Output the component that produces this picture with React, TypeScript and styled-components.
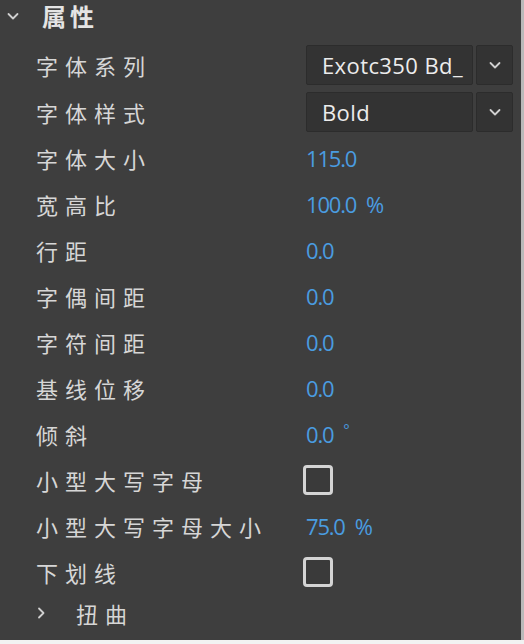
import styled, { createGlobalStyle } from 'styled-components';

const GlobalStyle = createGlobalStyle`
  html, body {
    margin: 0;
    padding: 0;
    background: #f2f2f2;
  }
`;

const Panel = styled.div`
  width: 521px;
  height: 640px;
  background: #3e3e3e;
  border-right: 3px solid #b9b9b9;
  overflow: hidden;
  font-family: "Noto Sans CJK SC", "Noto Sans", sans-serif;
  color: #d6d6d6;
`;

const Header = styled.div`
  height: 32px;
  display: flex;
  align-items: center;
  padding-left: 6px;
  gap: 22px;
`;

const HeaderTitle = styled.span`
  font-size: 24px;
  line-height: 28px;
  font-weight: 700;
  color: #e4e4e4;
  letter-spacing: 4px;
`;

const List = styled.div`
  display: flex;
  flex-direction: column;
  padding-top: 9px;
`;

const Row = styled.div<{ $tall?: boolean }>`
  height: ${({ $tall }) => ($tall ? '47px' : '46px')};
  display: grid;
  grid-template-columns: 270px 1fr;
  align-items: center;
  padding-left: 36px;
`;

const Label = styled.span`
  font-size: 22px;
  letter-spacing: 7px;
  white-space: nowrap;
  color: #d6d6d6;
`;

const Value = styled.span`
  font-family: "Open Sans", "Noto Sans", sans-serif;
  font-size: 22px;
  letter-spacing: -1.2px;
  color: #4a9ce0;
  display: flex;
  align-items: flex-start;
  gap: 10px;
`;

const Unit = styled.span`
  letter-spacing: 0;
`;

const Degree = styled.span`
  font-size: 15px;
  line-height: 1;
  margin-top: 3px;
`;

const Select = styled.div`
  display: flex;
  gap: 3px;
  height: 40px;
`;

const SelectText = styled.div`
  width: 150px;
  display: flex;
  align-items: center;
  padding-left: 15px;
  background: #333333;
  border: 1px solid #2c2c2c;
  border-radius: 2px;
  font-family: "Open Sans", "Noto Sans", sans-serif;
  font-size: 22px;
  letter-spacing: 0.4px;
  color: #ececec;
  white-space: nowrap;
  overflow: hidden;
`;

const SelectArrow = styled.div`
  width: 35px;
  display: flex;
  align-items: center;
  justify-content: center;
  background: #333333;
  border: 1px solid #2c2c2c;
  border-radius: 2px;
`;

const Checkbox = styled.div`
  width: 24px;
  height: 24px;
  margin-left: -3px;
  border: 3px solid #d4d4d4;
  border-radius: 4px;
  background: #3a3a3a;
`;

const Collapsed = styled.div`
  height: 46px;
  display: flex;
  align-items: center;
  padding-left: 34px;
  gap: 28px;
  margin-top: -5px;
`;

const Chevron = ({ dir, size = 14 }: { dir: 'down' | 'right'; size?: number }) => (
  <svg width={size} height={size} viewBox="0 0 14 14" fill="none">
    {dir === 'down' ? (
      <path d="M2.5 5 L7 9.5 L11.5 5" stroke="#d0d0d0" strokeWidth="1.8" strokeLinecap="round" strokeLinejoin="round" />
    ) : (
      <path d="M5 2.5 L9.5 7 L5 11.5" stroke="#d0d0d0" strokeWidth="1.8" strokeLinecap="round" strokeLinejoin="round" />
    )}
  </svg>
);

type Prop =
  | { label: string; kind: 'select'; value: string }
  | { label: string; kind: 'value'; value: string; unit?: string; degree?: boolean }
  | { label: string; kind: 'check' };

const props: Prop[] = [
  { label: '字体系列', kind: 'select', value: 'Exotc350 Bd_' },
  { label: '字体样式', kind: 'select', value: 'Bold' },
  { label: '字体大小', kind: 'value', value: '115.0' },
  { label: '宽高比', kind: 'value', value: '100.0', unit: '%' },
  { label: '行距', kind: 'value', value: '0.0' },
  { label: '字偶间距', kind: 'value', value: '0.0' },
  { label: '字符间距', kind: 'value', value: '0.0' },
  { label: '基线位移', kind: 'value', value: '0.0' },
  { label: '倾斜', kind: 'value', value: '0.0', degree: true },
  { label: '小型大写字母', kind: 'check' },
  { label: '小型大写字母大小', kind: 'value', value: '75.0', unit: '%' },
  { label: '下划线', kind: 'check' },
];

export default function App() {
  return (
    <>
      <GlobalStyle />
      <Panel>
        <Header>
          <Chevron dir="down" size={14} />
          <HeaderTitle>属性</HeaderTitle>
        </Header>
        <List>
          {props.map((p) => (
            <Row key={p.label} $tall={p.kind === 'select'}>
              <Label>{p.label}</Label>
              {p.kind === 'select' && (
                <Select>
                  <SelectText>{p.value}</SelectText>
                  <SelectArrow>
                    <Chevron dir="down" size={14} />
                  </SelectArrow>
                </Select>
              )}
              {p.kind === 'value' && (
                <Value>
                  {p.value}
                  {p.unit && <Unit>{p.unit}</Unit>}
                  {p.degree && <Degree>°</Degree>}
                </Value>
              )}
              {p.kind === 'check' && <Checkbox />}
            </Row>
          ))}
          <Collapsed>
            <Chevron dir="right" size={14} />
            <Label>扭曲</Label>
          </Collapsed>
        </List>
      </Panel>
    </>
  );
}
